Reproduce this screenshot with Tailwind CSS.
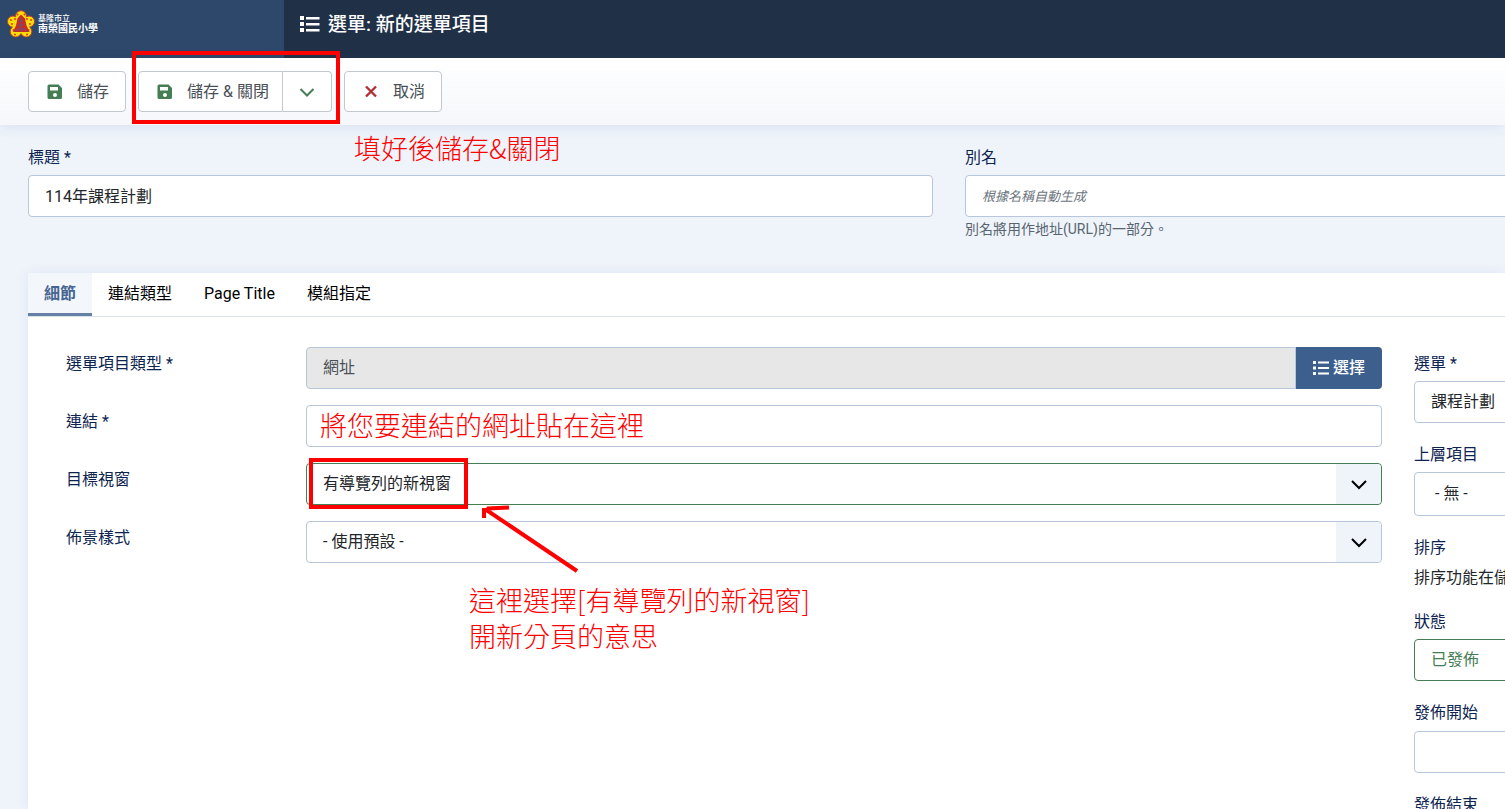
<!DOCTYPE html>
<html lang="zh-Hant">
<head>
<meta charset="utf-8">
<meta name="viewport" content="width=device-width, initial-scale=1">
<title>選單: 新的選單項目</title>
<script src="https://cdn.jsdelivr.net/npm/@tailwindcss/browser@4"></script>
</head>
<body class="min-h-screen h-screen overflow-hidden bg-[#eff4fb] font-[Roboto,'Noto_Sans_CJK_TC',sans-serif] text-base text-[#22262a]">
<div class="flex h-full flex-col">
  <header class="flex h-[58px] shrink-0 bg-[#203047] text-white">
    <a href="#" class="flex w-[284px] shrink-0 items-start gap-[3px] bg-[#2e486b] pl-[7px] pt-[10px]">
      <svg class="size-[28px] shrink-0" viewBox="0 0 28 28" aria-hidden="true">
        <g fill="#ffdc08" stroke="#b8402c" stroke-width="1">
          <circle cx="14" cy="6.200" r="5.500"/><circle cx="22" cy="11.500" r="5.500"/><circle cx="19.300" cy="21.500" r="5.500"/><circle cx="8.700" cy="21.500" r="5.500"/><circle cx="6" cy="11.500" r="5.500"/>
        </g>
        <circle cx="14" cy="14.500" r="9" fill="#ffdc08"/>
        <g fill="#d8402c">
          <circle cx="10.500" cy="4.500" r="1"/><circle cx="17.500" cy="4.500" r="1"/><circle cx="4" cy="10" r="1"/><circle cx="24" cy="10" r="1"/><circle cx="5" cy="14" r="1"/><circle cx="23" cy="14" r="1"/><circle cx="6.500" cy="20" r="1"/><circle cx="21.500" cy="20" r="1"/><circle cx="8" cy="24.500" r="1"/><circle cx="20" cy="24.500" r="1"/><circle cx="8" cy="9" r="1"/><circle cx="20" cy="9" r="1"/>
        </g>
        <path d="M14 4.500l4 4 1.500 7 3 6.500H6l3-6.500 1.500-7z" fill="#c92a2a"/>
        <path d="M11.500 11h5M10.500 15h7M9.500 19h9M14 8v14M8 22l3-3M20 22l-3-3" stroke="#6b5273" stroke-width="1" fill="none"/>
      </svg>
      <span class="flex flex-col pt-1 text-white">
        <span class="text-[8px] leading-[10px] font-medium">基隆市立</span>
        <span class="text-[10px] leading-[10px] font-bold">南榮國民小學</span>
      </span>
    </a>
    <div class="flex h-[50px] items-center gap-2 pl-4">
      <svg class="h-5 w-5 shrink-0" viewBox="0 0 20 20" fill="currentColor" aria-hidden="true"><path d="M0 1h4v4H0zM6 2h13.500v2.500H6zM0 7h4v4H0zM6 8h13.500v2.500H6zM0 13h4v4H0zM6 14h13.500v2.500H6z"/></svg>
      <h1 class="whitespace-nowrap text-[19px] leading-6 font-medium">選單: 新的選單項目</h1>
    </div>
  </header>

  <div class="relative flex h-[67px] shrink-0 gap-3 bg-linear-to-b from-white to-[#f5f7fb] pl-7 pt-[13px] text-[#495057] shadow-[0_3px_12px_rgba(40,70,130,0.09)]">
    <button type="button" class="flex h-[41px] w-[98px] items-center gap-[14px] rounded border border-[#c2c8d0] bg-white pl-[18px] whitespace-nowrap">
      <svg class="size-4 shrink-0 text-[#457d54]" viewBox="0 0 16 16" fill="currentColor" aria-hidden="true"><path fill-rule="evenodd" d="M2 0.500H11.500l3.500 3.500v9.500a1.500 1.500 0 0 1-1.500 1.500H2A1.500 1.500 0 0 1 0.500 13.500v-11.500A1.500 1.500 0 0 1 2 0.500zM3 3v3.500h8V3zm5 6a2 2 0 1 0 0 4 2 2 0 0 0 0-4z"/></svg>儲存</button>
    <div class="relative flex h-[41px] w-[194px]">
      <button type="button" class="flex flex-1 items-center gap-[14px] rounded-l border border-[#c2c8d0] bg-white pl-[18px] whitespace-nowrap">
        <svg class="size-4 shrink-0 text-[#457d54]" viewBox="0 0 16 16" fill="currentColor" aria-hidden="true"><path fill-rule="evenodd" d="M2 0.500H11.500l3.500 3.500v9.500a1.500 1.500 0 0 1-1.500 1.500H2A1.500 1.500 0 0 1 0.500 13.500v-11.500A1.500 1.500 0 0 1 2 0.500zM3 3v3.500h8V3zm5 6a2 2 0 1 0 0 4 2 2 0 0 0 0-4z"/></svg>儲存 &amp; 關閉</button>
      <button type="button" aria-label="更多儲存選項" class="flex w-[49px] items-center justify-center rounded-r border border-l-0 border-[#c2c8d0] bg-white text-[#457d54]">
        <svg class="size-4" viewBox="0 0 16 16" fill="none" stroke="currentColor" stroke-width="2" aria-hidden="true"><path d="M1.500 5L8 11.500 14.500 5"/></svg>
      </button>
      <div class="pointer-events-none absolute -top-5 -right-2 -bottom-3 -left-[6px] border-4 border-[#ff0000]"></div>
    </div>
    <button type="button" class="flex h-[41px] w-[98px] items-center gap-[14px] rounded border border-[#c2c8d0] bg-white pl-[18px] whitespace-nowrap">
      <svg class="size-4 shrink-0 text-[#b32f36]" viewBox="0 0 16 16" fill="none" stroke="currentColor" stroke-width="2.400" aria-hidden="true"><path d="M3 2.500l10 10M13 2.500l-10 10"/></svg>取消</button>
    <p class="pointer-events-none absolute left-[354px] top-[70px] whitespace-nowrap font-['Noto_Sans_CJK_TC',sans-serif] text-[27px] leading-10 font-light text-[#ff0000]">填好後儲存&amp;關閉</p>
  </div>

  <main class="flex min-h-0 flex-1 flex-col pl-7 pt-[21px]">
    <div class="grid grid-cols-[905fr_540fr] gap-8">
      <div class="flex flex-col gap-[5px]">
        <label for="title" class="leading-6 text-[#0d2450]">標題 *</label>
        <input id="title" type="text" value="114年課程計劃" class="h-[42px] w-full rounded border border-[#b7c6d8] bg-white px-4 pb-[3px]">
      </div>
      <div class="-mr-4 flex flex-col">
        <label for="alias" class="mb-[5px] leading-6 text-[#0d2450]">別名</label>
        <input id="alias" type="text" placeholder="根據名稱自動生成" class="h-[42px] w-full rounded border border-[#b7c6d8] bg-white px-4 pb-px placeholder:text-[13px] placeholder:text-[#6d757e] placeholder:italic">
        <p class="pt-[2px] text-sm leading-5 text-[#5a6470]">別名將用作地址(URL)的一部分。</p>
      </div>
    </div>

    <section class="mt-[34px] min-h-0 flex-1 bg-white shadow-[0_0_12px_rgba(40,70,130,0.08)]">
      <div role="tablist" class="flex h-11 border-b border-[#d8e0e9] text-black">
        <button type="button" role="tab" aria-selected="true" class="border-b-3 border-[#6680a5] bg-[#f3f7fb] px-4 pt-[2px] font-bold text-[#476592]">細節</button>
        <button type="button" role="tab" aria-selected="false" class="border-b-3 border-transparent px-4 pt-[2px]">連結類型</button>
        <button type="button" role="tab" aria-selected="false" class="border-b-3 border-transparent px-4 pt-[2px]">Page Title</button>
        <button type="button" role="tab" aria-selected="false" class="border-b-3 border-transparent px-4 pt-[2px]">模組指定</button>
      </div>

      <div class="grid grid-cols-[minmax(0,1fr)_91px] gap-8 pt-[30px]">
        <div class="relative flex flex-col gap-4 pl-[38px]">
          <div class="flex h-[42px]">
            <label for="type" class="w-60 shrink-0 pt-[5px] leading-6 text-[#0d2450]">選單項目類型 *</label>
            <input id="type" type="text" value="網址" readonly class="min-w-0 flex-1 rounded-l border border-[#b7c6d8] bg-[#e7e7e7] px-4 text-[#495057]">
            <button type="button" class="flex w-[86px] items-center justify-center gap-1 rounded-r bg-[#3d5f8d] font-medium whitespace-nowrap text-white">
              <svg class="size-4 shrink-0" viewBox="0 0 16 16" fill="currentColor" aria-hidden="true"><path d="M0 1h3v3H0zM5 1.500h11v2H5zM0 6.500h3v3H0zM5 7h11v2H5zM0 12h3v3H0zM5 12.500h11v2H5z"/></svg>選擇</button>
          </div>
          <div class="flex h-[42px]">
            <label for="link" class="w-60 shrink-0 pt-[5px] leading-6 text-[#0d2450]">連結 *</label>
            <input id="link" type="text" class="min-w-0 flex-1 rounded border border-[#b7c6d8] bg-white px-4">
          </div>
          <div class="flex h-[42px]">
            <label for="target" class="w-60 shrink-0 pt-[5px] leading-6 text-[#0d2450]">目標視窗</label>
            <div class="relative flex min-w-0 flex-1">
              <select id="target" class="w-full appearance-none rounded border border-[#457d54] bg-white pr-12 pl-4"><option>有導覽列的新視窗</option></select>
              <span class="pointer-events-none absolute inset-y-px right-px flex w-[45px] items-center justify-center rounded-r-sm bg-[#eff4fb] text-black">
                <svg class="size-4" viewBox="0 0 16 16" fill="none" stroke="currentColor" stroke-width="2" aria-hidden="true"><path d="M1 5L8 12l7-7"/></svg>
              </span>
            </div>
          </div>
          <div class="flex h-[42px]">
            <label for="style" class="w-60 shrink-0 pt-[5px] leading-6 text-[#0d2450]">佈景樣式</label>
            <div class="relative flex min-w-0 flex-1">
              <select id="style" class="w-full appearance-none rounded border border-[#b7c6d8] bg-white pr-12 pl-4"><option>- 使用預設 -</option></select>
              <span class="pointer-events-none absolute inset-y-px right-px flex w-[45px] items-center justify-center rounded-r-sm bg-[#eff4fb] text-black">
                <svg class="size-4" viewBox="0 0 16 16" fill="none" stroke="currentColor" stroke-width="2" aria-hidden="true"><path d="M1 5L8 12l7-7"/></svg>
              </span>
            </div>
          </div>

          <!-- Instructor's red annotations over the form -->
          <p class="pointer-events-none absolute left-[292px] top-[58px] whitespace-nowrap font-['Noto_Sans_CJK_TC',sans-serif] text-[27px] leading-10 font-light text-[#ff0000]">將您要連結的網址貼在這裡</p>
          <div class="pointer-events-none absolute left-[281px] top-[111px] h-[51px] w-[159px] border-4 border-[#ff0000]"></div>
          <svg class="pointer-events-none absolute left-[452px] top-[153px] h-20 w-[104px]" viewBox="0 0 104 80" fill="none" stroke="#ff0000" stroke-width="4" aria-hidden="true"><path d="M5 9l92 62M7 8.500l22-1M4 8v10"/></svg>
          <p class="pointer-events-none absolute left-[441px] top-[235px] whitespace-nowrap font-['Noto_Sans_CJK_TC',sans-serif] text-[27px] leading-9 font-light text-[#ff0000]">這裡選擇[有導覽列的新視窗]<br>開新分頁的意思</p>
        </div>

        <div class="flex flex-col gap-5 overflow-hidden pt-[5px] whitespace-nowrap">
          <div class="flex flex-col gap-[5px]">
            <label for="menu" class="leading-6 text-[#0d2450]">選單 *</label>
            <select id="menu" class="h-[42px] w-[300px] appearance-none rounded border border-[#b7c6d8] bg-white px-4"><option>課程計劃</option></select>
          </div>
          <div class="flex flex-col gap-[5px]">
            <label for="parent" class="leading-6 text-[#0d2450]">上層項目</label>
            <select id="parent" class="h-11 w-[300px] appearance-none rounded border border-[#b7c6d8] bg-white px-5"><option>- 無 -</option></select>
          </div>
          <div class="flex flex-col gap-[6px]">
            <h2 class="leading-6 text-[#0d2450]">排序</h2>
            <p class="leading-6">排序功能在儲存後才能使用</p>
          </div>
          <div class="flex flex-col gap-[5px]">
            <label for="state" class="leading-6 text-[#0d2450]">狀態</label>
            <select id="state" class="h-[42px] w-[300px] appearance-none rounded border border-[#457d54] bg-white px-4 text-[#457d54]"><option>已發佈</option></select>
          </div>
          <div class="flex flex-col gap-[6px]">
            <label for="start" class="leading-6 text-[#0d2450]">發佈開始</label>
            <input id="start" type="text" class="h-[42px] w-[300px] rounded border border-[#b7c6d8] bg-white px-4">
          </div>
          <div class="flex flex-col gap-[6px]">
            <label for="end" class="leading-6 text-[#0d2450]">發佈結束</label>
            <input id="end" type="text" class="h-[42px] w-[300px] rounded border border-[#b7c6d8] bg-white px-4">
          </div>
        </div>
      </div>
    </section>
  </main>
</div>
</body>
</html>
